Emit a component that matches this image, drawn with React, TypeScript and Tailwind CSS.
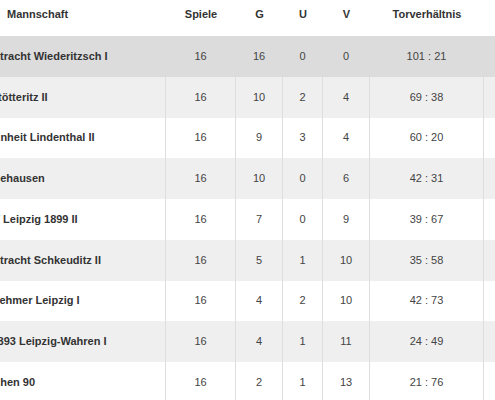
type Row = {
  name: string;
  shift: string;
  games: number;
  w: number;
  d: number;
  l: number;
  goals: string;
};

const rows: Row[] = [
  { name: "Eintracht Wiederitzsch I", shift: "ml-[-17px]", games: 16, w: 16, d: 0, l: 0, goals: "101 : 21" },
  { name: "SV Stötteritz II", shift: "ml-[-27px]", games: 16, w: 10, d: 2, l: 4, goals: "69 : 38" },
  { name: "Einheit Lindenthal II", shift: "ml-[-10px]", games: 16, w: 9, d: 3, l: 4, goals: "60 : 20" },
  { name: "SV Seehausen", shift: "ml-[-31px]", games: 16, w: 10, d: 0, l: 6, goals: "42 : 31" },
  { name: "SSV Leipzig 1899 II", shift: "ml-[-22px]", games: 16, w: 7, d: 0, l: 9, goals: "39 : 67" },
  { name: "Eintracht Schkeuditz II", shift: "ml-[-17px]", games: 16, w: 5, d: 1, l: 10, goals: "35 : 58" },
  { name: "Unternehmer Leipzig I", shift: "ml-[-36px]", games: 16, w: 4, d: 2, l: 10, goals: "42 : 73" },
  { name: "TSV 1893 Leipzig-Wahren I", shift: "ml-[-33px]", games: 16, w: 4, d: 1, l: 11, goals: "24 : 49" },
  { name: "FC Eichen 90", shift: "ml-[-34px]", games: 16, w: 2, d: 1, l: 13, goals: "21 : 76" },
];

function TableRow({ row, index }: { row: Row; index: number }) {
  const top = index === 0;
  const bg = top ? "bg-[#dcdcdc]" : index % 2 === 1 ? "bg-[#efefef]" : "bg-white";
  const line = top ? "border-transparent" : "border-[#dedede]";
  return (
    <div className={`flex h-[40.75px] items-center ${bg}`}>
      <div className="w-[165px] h-full flex items-center overflow-hidden whitespace-nowrap">
        <span className={`${row.shift} font-bold text-[#333]`}>{row.name}</span>
      </div>
      <div className={`w-[70px] h-full flex items-center justify-center border-l ${line}`}>{row.games}</div>
      <div className={`w-[47px] h-full flex items-center justify-center border-l ${line}`}>{row.w}</div>
      <div className={`w-[40px] h-full flex items-center justify-center border-l ${line}`}>{row.d}</div>
      <div className={`w-[47px] h-full flex items-center justify-center border-l ${line}`}>{row.l}</div>
      <div className={`w-[114px] h-full flex items-center justify-center border-l ${line}`}>{row.goals}</div>
      <div className={`flex-1 h-full border-l ${line}`}></div>
    </div>
  );
}

export default function App() {
  return (
    <div className="w-[495px] h-[400px] overflow-hidden bg-white font-['Liberation_Sans',Arial,sans-serif] text-[11px] leading-[13px] text-[#444]">
      <div className="flex h-[36px] pt-[8px] font-bold text-[#333]">
        <div className="w-[165px] pl-[7px]">Mannschaft</div>
        <div className="w-[71px] text-center pl-[1px]">Spiele</div>
        <div className="w-[47px] text-center">G</div>
        <div className="w-[40px] text-center">U</div>
        <div className="w-[47px] text-center">V</div>
        <div className="w-[114px] text-center">Torverhältnis</div>
        <div className="flex-1"></div>
      </div>
      {rows.map((row, i) => (
        <TableRow key={row.name} row={row} index={i} />
      ))}
    </div>
  );
}
